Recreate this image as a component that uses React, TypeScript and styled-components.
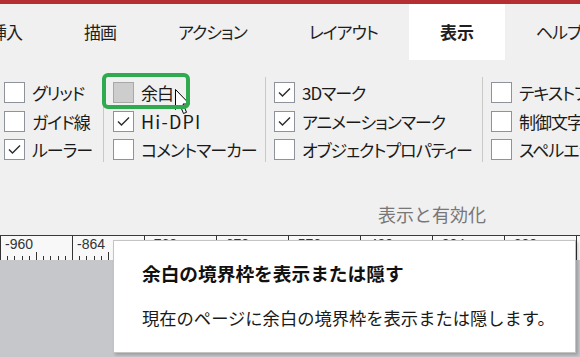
import React from "react";
import styled, { createGlobalStyle } from "styled-components";

const GlobalStyle = createGlobalStyle`
  html, body {
    margin: 0;
    padding: 0;
    width: 580px;
    height: 357px;
    overflow: hidden;
    background: #c6c7cb;
  }
  body {
    font-family: "Noto Sans CJK JP", "Noto Sans", sans-serif;
  }
`;

const Window = styled.div`
  position: relative;
  width: 580px;
  height: 357px;
  overflow: hidden;
  display: flex;
  flex-direction: column;
  background: #c6c7cb;
`;

const TitleStrip = styled.div`
  height: 4px;
  flex: none;
  background: #b52e31;
`;

const TabBar = styled.div`
  height: 56px;
  flex: none;
  display: flex;
  background: #f0f0f0;
  overflow: hidden;
`;

const TabList = styled.div`
  display: flex;
  margin-left: -41px;
  white-space: nowrap;
`;

const Tab = styled.div<{ $active?: boolean }>`
  display: flex;
  align-items: center;
  padding: 0 31px;
  font-size: 17px;
  line-height: 24px;
  letter-spacing: ${(p) => (p.$active ? "0" : "-1px")};
  font-feature-settings: "palt";
  color: #1f1f1f;
  font-weight: ${(p) => (p.$active ? 700 : 400)};
  background: ${(p) => (p.$active ? "#ffffff" : "transparent")};
`;

const Ribbon = styled.div`
  flex: none;
  height: 175px;
  background: #f0f0f0;
  border-bottom: 1px solid #3a3a3a;
  display: flex;
  flex-direction: column;
`;

const GroupsRow = styled.div`
  display: flex;
  align-items: flex-start;
  padding-top: 17px;
`;

const Group = styled.div<{ $w?: number; $pl: number; $last?: boolean }>`
  box-sizing: border-box;
  height: 85px;
  ${(p) => (p.$w ? `width: ${p.$w}px; flex: none;` : "flex: 1; overflow: hidden;")}
  padding: 5px 0 0 ${(p) => p.$pl}px;
  border-right: ${(p) => (p.$last ? "none" : "1px solid #c9c9c9")};
  display: grid;
  grid-auto-rows: 21px;
  row-gap: 7.5px;
`;

const Row = styled.div`
  display: flex;
  align-items: center;
  gap: 7px;
  white-space: nowrap;
`;

const Box = styled.span<{ $hover?: boolean }>`
  box-sizing: border-box;
  width: 21px;
  height: 21px;
  flex: none;
  display: flex;
  align-items: center;
  justify-content: center;
  border: 1px solid ${(p) => (p.$hover ? "#a8a8a8" : "#8e939b")};
  background: ${(p) => (p.$hover ? "#cdcdcd" : "#ffffff")};
`;

const Label = styled.span<{ $latin?: boolean }>`
  font-size: ${(p) => (p.$latin ? "18px" : "17px")};
  letter-spacing: ${(p) => (p.$latin ? "1.2px" : "-1px")};
  line-height: 21px;
  font-feature-settings: "palt";
  color: #1a1a1a;
`;

const Caption = styled.div`
  margin-top: 42px;
  padding-left: 378px;
  font-size: 18px;
  line-height: 20px;
  color: #777777;
  white-space: nowrap;
`;

const Ruler = styled.div`
  flex: none;
  height: 24px;
  display: flex;
  background: #f8f8f8;
  overflow: hidden;
`;

const RulerCell = styled.div`
  box-sizing: border-box;
  flex: none;
  width: 72px;
  height: 24px;
  border-left: 1px solid #333333;
  display: flex;
  flex-direction: column;
  justify-content: space-between;
`;

const RulerLabel = styled.span`
  padding: 1px 0 0 4px;
  font-family: "Liberation Sans", Arial, sans-serif;
  font-size: 14px;
  line-height: 14px;
  color: #333333;
`;

const Canvas = styled.div`
  flex: 1;
  background: #c6c7cb;
`;

const Tooltip = styled.div`
  position: absolute;
  left: 113px;
  top: 240px;
  width: 463px;
  height: 113px;
  box-sizing: border-box;
  background: #ffffff;
  border: 1px solid #c4c4c4;
  box-shadow: 2px 2px 3px rgba(0, 0, 0, 0.22);
  padding: 20px 0 0 28px;
  display: flex;
  flex-direction: column;
  gap: 21px;
`;

const TipTitle = styled.div`
  font-size: 18.7px;
  line-height: 24px;
  font-weight: 700;
  color: #111111;
  white-space: nowrap;
`;

const TipText = styled.div`
  font-size: 17.3px;
  line-height: 24px;
  color: #1a1a1a;
  white-space: nowrap;
`;

const Highlight = styled.div`
  position: absolute;
  left: 102px;
  top: 73px;
  width: 88px;
  height: 36px;
  box-sizing: border-box;
  border: 4px solid #2faa4e;
  border-radius: 6px;
  pointer-events: none;
`;

const Cursor = styled.svg`
  position: absolute;
  left: 175px;
  top: 89px;
`;

const Check = () => (
  <svg width="19" height="19" viewBox="0 0 19 19">
    <path d="M4 9.5 L7.5 13 L15 5.5" fill="none" stroke="#2b2b2b" strokeWidth="1.4" />
  </svg>
);

type Item = { label: string; checked?: boolean; hover?: boolean; latin?: boolean };

const groups: { w?: number; pl: number; items: Item[] }[] = [
  {
    w: 104,
    pl: 4,
    items: [{ label: "グリッド" }, { label: "ガイド線" }, { label: "ルーラー", checked: true }],
  },
  {
    w: 162,
    pl: 9,
    items: [
      { label: "余白", hover: true },
      { label: "Hi-DPI", checked: true, latin: true },
      { label: "コメントマーカー" },
    ],
  },
  {
    w: 217,
    pl: 8,
    items: [
      { label: "3Dマーク", checked: true },
      { label: "アニメーションマーク", checked: true },
      { label: "オブジェクトプロパティー" },
    ],
  },
  {
    pl: 8,
    items: [{ label: "テキストフレーム" }, { label: "制御文字" }, { label: "スペルエラー" }],
  },
];

const tabs = ["挿入", "描画", "アクション", "レイアウト", "表示", "ヘルプ"];
const rulerLabels = ["-960", "-864", "-768", "-672", "-576", "-480", "-384", "-288", "-192"];

const Ticks = () => (
  <svg width="71" height="9" viewBox="0 0 71 9" shapeRendering="crispEdges">
    {Array.from({ length: 9 }, (_, i) => {
      const x = Math.round(7.2 * (i + 1)) - 1;
      const h = i === 4 ? 8 : 4;
      return <rect key={i} x={x} y={9 - h} width="1" height={h} fill="#333" />;
    })}
  </svg>
);

export default function App() {
  return (
    <Window>
      <GlobalStyle />
      <TitleStrip />
      <TabBar>
        <TabList>
          {tabs.map((t) => (
            <Tab key={t} $active={t === "表示"}>
              {t}
            </Tab>
          ))}
        </TabList>
      </TabBar>
      <Ribbon>
        <GroupsRow>
          {groups.map((g, gi) => (
            <Group key={gi} $w={g.w} $pl={g.pl} $last={gi === groups.length - 1}>
              {g.items.map((it) => (
                <Row key={it.label}>
                  <Box $hover={it.hover}>{it.checked && <Check />}</Box>
                  <Label $latin={it.latin}>{it.label}</Label>
                </Row>
              ))}
            </Group>
          ))}
        </GroupsRow>
        <Caption>表示と有効化</Caption>
      </Ribbon>
      <Ruler>
        {rulerLabels.map((l) => (
          <RulerCell key={l}>
            <RulerLabel>{l}</RulerLabel>
            <Ticks />
          </RulerCell>
        ))}
      </Ruler>
      <Canvas />
      <Cursor width="16" height="26" viewBox="0 0 16 26">
        <path
          d="M0.5 0.5 L0.5 20.5 L5 16 L8.5 24.5 L11.5 23.3 L8 15 L14.5 15 Z"
          fill="#ffffff"
          stroke="#000000"
          strokeWidth="1"
        />
      </Cursor>
      <Highlight />
      <Tooltip>
        <TipTitle>余白の境界枠を表示または隠す</TipTitle>
        <TipText>現在のページに余白の境界枠を表示または隠します。</TipText>
      </Tooltip>
    </Window>
  );
}
